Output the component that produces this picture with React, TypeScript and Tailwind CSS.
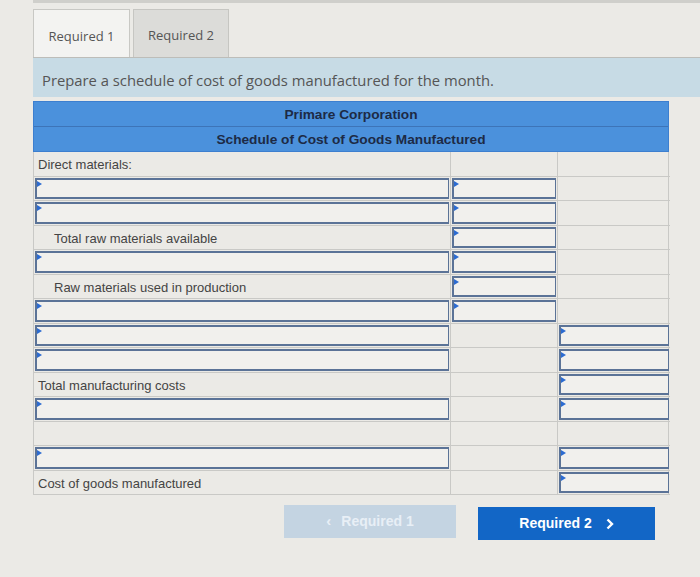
import React from "react";

type Cell = "in" | null | { label: string; indent?: boolean };

const ROWS: Cell[][] = [
  [{ label: "Direct materials:" }, null, null],
  ["in", "in", null],
  ["in", "in", null],
  [{ label: "Total raw materials available", indent: true }, "in", null],
  ["in", "in", null],
  [{ label: "Raw materials used in production", indent: true }, "in", null],
  ["in", "in", null],
  ["in", null, "in"],
  ["in", null, "in"],
  [{ label: "Total manufacturing costs" }, null, "in"],
  ["in", null, "in"],
  [null, null, null],
  ["in", null, "in"],
  [{ label: "Cost of goods manufactured" }, null, "in"],
];

function InputBox() {
  return (
    <div className="relative h-full w-full border-y-2 border-l-2 border-r border-[#5b7397] bg-[#f1f0ed]">
      <span className="absolute left-0 top-[1px] h-0 w-0 border-y-[3px] border-l-[5px] border-y-transparent border-l-[#2c6bd1]" />
    </div>
  );
}

function TableCell({ cell, last }: { cell: Cell; last: boolean }) {
  return (
    <div
      className={`h-[24.5px] border-b border-[#c9c9c6] p-[1px] ${last ? "" : "border-r"}`}
    >
      {cell === "in" ? (
        <InputBox />
      ) : cell ? (
        <div
          className={`flex h-full items-center pt-[2px] text-[13px] leading-none text-[#444] ${
            cell.indent ? "pl-[19px]" : "pl-[3px]"
          }`}
        >
          {cell.label}
        </div>
      ) : null}
    </div>
  );
}

export default function App() {
  return (
    <div
      className="min-h-[577px] w-[700px] bg-[#ebeae6]"
      style={{ fontFamily: '"Liberation Sans", Arial, sans-serif' }}
    >
      <div className="ml-[33px] h-[3px] bg-[#cfcfcb]" />
      <div className="pl-[33px] pt-[6px]">
        <div
          className="flex items-end gap-[3px] border-b border-[#bdbdb9]"
          style={{ fontFamily: '"Open Sans", sans-serif' }}
        >
          <div className="flex h-[48px] w-[97px] items-center justify-center border border-b-0 border-[#c8c8c4] bg-[#f3f3f1] pt-[6px] text-[13px] text-[#555]">
            Required 1
          </div>
          <div className="flex h-[48px] w-[96px] items-center justify-center border border-b-0 border-[#c6c6c2] bg-[#dcdcd9] pt-[5px] text-[13px] text-[#555]">
            Required 2
          </div>
        </div>
        <div
          className="flex h-[39px] items-center bg-[#c7dbe5] pl-[9px] pt-[5px] text-[14.8px] text-[#555]"
          style={{ fontFamily: '"Open Sans", sans-serif' }}
        >
          Prepare a schedule of cost of goods manufactured for the month.
        </div>

        <div className="mt-[4px] w-[636px]">
          <div className="border border-[#3d7fcf] bg-[#4b91dc] text-[13.7px] font-bold text-[#1d2a45]">
            <div className="flex h-[25px] items-center justify-center border-b border-[#3d74b8] pt-[3px]">
              Primare Corporation
            </div>
            <div className="flex h-[24px] items-center justify-center pt-[3px]">
              Schedule of Cost of Goods Manufactured
            </div>
          </div>
          <div className="grid grid-cols-[417px_107px_112px] border-l border-r border-[#c9c9c6]">
            {ROWS.map((row, r) =>
              row.map((cell, c) => (
                <TableCell key={`${r}-${c}`} cell={cell} last={c === 2} />
              ))
            )}
          </div>

          <div className="mt-[10px] flex justify-end gap-[22px] pr-[14px]">
            <button className="flex h-[33px] w-[172px] items-center justify-center gap-[10px] bg-[#c4d4e2] text-[14px] font-bold text-[#e8eff6]">
              <span className="text-[15px]">&lsaquo;</span>
              <span>Required 1</span>
            </button>
            <button className="mt-[2px] flex h-[33px] w-[177px] items-center justify-center gap-[14px] bg-[#1266c6] text-[14px] font-bold text-white">
              <span>Required 2</span>
              <svg width="8" height="12" viewBox="0 0 8 12">
                <path d="M1.5 1.5 L6 6 L1.5 10.5" stroke="white" strokeWidth="2.4" fill="none" />
              </svg>
            </button>
          </div>
        </div>
      </div>
    </div>
  );
}
